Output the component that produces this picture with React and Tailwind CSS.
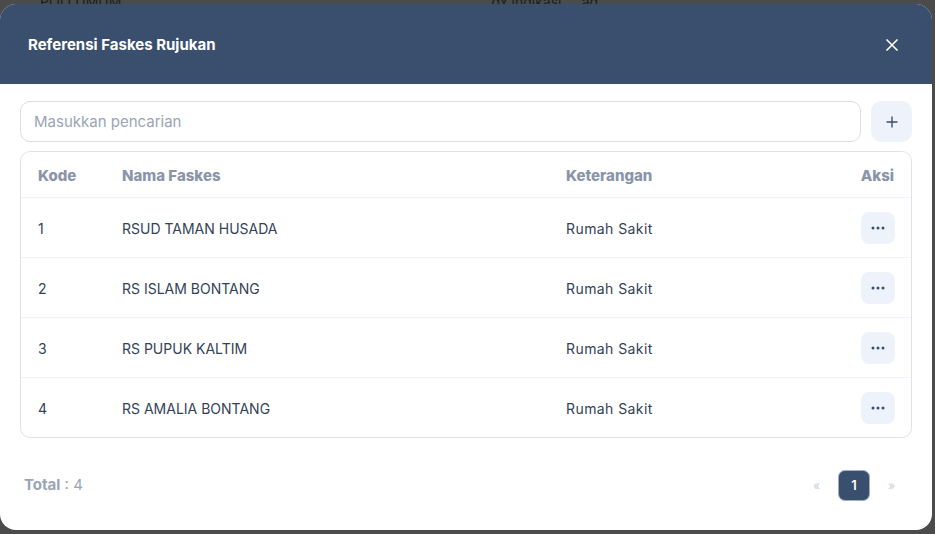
import React from 'react';

const rows = [
  { kode: '1', nama: 'RSUD TAMAN HUSADA', ket: 'Rumah Sakit' },
  { kode: '2', nama: 'RS ISLAM BONTANG', ket: 'Rumah Sakit' },
  { kode: '3', nama: 'RS PUPUK KALTIM', ket: 'Rumah Sakit' },
  { kode: '4', nama: 'RS AMALIA BONTANG', ket: 'Rumah Sakit' },
];

function Dots() {
  return (
    <svg width="14" height="4" viewBox="0 0 14 4" fill="#3a4f6d">
      <circle cx="2" cy="2" r="1.5" />
      <circle cx="7" cy="2" r="1.5" />
      <circle cx="12" cy="2" r="1.5" />
    </svg>
  );
}

export default function App() {
  return (
    <div className="relative h-[534px] w-[935px] overflow-hidden bg-[#4b4b4b] font-['Inter',sans-serif]">
      {/* dimmed page behind the dialog */}
      <div className="flex h-[4px] items-end text-[14px] leading-none text-[#1d1d1d]">
        <span className="ml-[40px] -mb-[5px]">POLI UMUM</span>
        <span className="ml-[370px] -mb-[5px]">dx indikasi.....ad</span>
      </div>

      <div className="w-[932px] h-[526px] overflow-hidden rounded-2xl bg-white flex flex-col">
        <div className="flex h-[80px] shrink-0 items-center justify-between bg-[#3a4f6d] pl-[28px] pr-[33px] pt-[2px]">
          <h2 className="text-[15px] font-bold text-white">Referensi Faskes Rujukan</h2>
          <button className="text-white">
            <svg width="14" height="14" viewBox="0 0 14 14" stroke="currentColor" strokeWidth="1.6" fill="none">
              <path d="M1.5 1.5l11 11M12.5 1.5l-11 11" />
            </svg>
          </button>
        </div>

        <div className="flex flex-col px-[20px] pt-[17px]">
          <div className="flex gap-[10px]">
            <input
              placeholder="Masukkan pencarian"
              className="h-[41px] flex-1 rounded-[10px] border border-[#d9dee6] px-[13px] text-[15px] text-[#334155] placeholder:text-[#9aa5b5] outline-none"
            />
            <button className="flex h-[41px] w-[41px] items-center justify-center rounded-[10px] bg-[#eef3fb] text-[#3a4f6d]">
              <svg width="12" height="12" viewBox="0 0 12 12" stroke="currentColor" strokeWidth="1.4">
                <path d="M6 0.5v11M0.5 6h11" />
              </svg>
            </button>
          </div>

          <div className="mt-[9px] rounded-[10px] border border-[#dfe3e9]">
            <div className="grid h-[46px] grid-cols-[84px_444px_1fr_auto] items-center border-b border-[#f1f3f6] pl-[17px] pr-[17px] pt-[3px] text-[15px] font-extrabold text-[#8a95a8]">
              <span>Kode</span>
              <span>Nama Faskes</span>
              <span>Keterangan</span>
              <span>Aksi</span>
            </div>
            {rows.map((r, i) => (
              <div
                key={r.kode}
                className={`grid grid-cols-[84px_444px_1fr_auto] items-center pl-[17px] pr-[16px] text-[14px] text-[#344256] ${i < rows.length - 1 ? 'h-[60px] border-b border-[#f1f3f6]' : 'h-[59px]'}`}
              >
                <span className="pt-[2px]">{r.kode}</span>
                <span className="pt-[2px]">{r.nama}</span>
                <span className="pt-[2px] tracking-[0.03em]">{r.ket}</span>
                <button className="flex h-[32px] w-[34px] items-center justify-center rounded-[8px] bg-[#eef3fb]">
                  <Dots />
                </button>
              </div>
            ))}
          </div>

          <div className="mt-[32px] flex items-center justify-between pl-[4px] pr-[11px]">
            <p className="text-[15px] text-[#9aa5b5]">
              <span className="font-bold">Total</span> : 4
            </p>
            <div className="flex items-center gap-[12px] text-[12px] text-[#c7ced8]">
              <span className="px-[6px]">«</span>
              <button className="flex h-[31px] w-[32px] items-center justify-center rounded-[7px] border border-[#9fb0c6] bg-[#3a4f6d] text-[13px] font-semibold text-white">
                1
              </button>
              <span className="px-[6px]">»</span>
            </div>
          </div>
        </div>
      </div>
    </div>
  );
}
